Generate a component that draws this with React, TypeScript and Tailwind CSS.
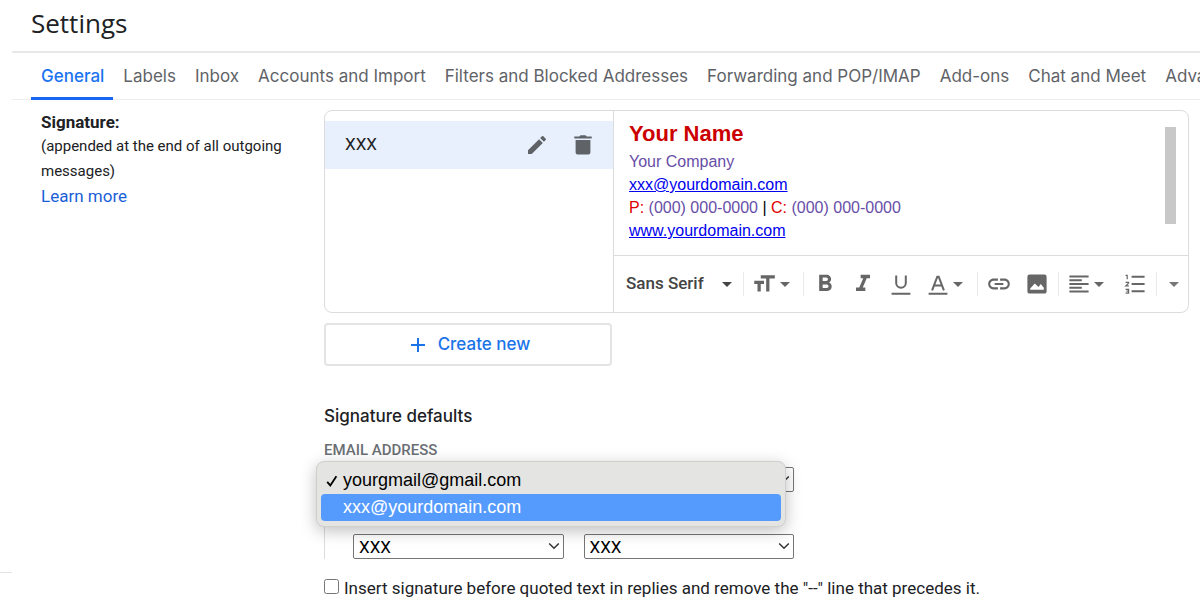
import { useState, type ReactNode } from 'react';
import {
  MdAdd,
  MdArrowDropDown,
  MdEdit,
  MdFormatBold,
  MdFormatItalic,
  MdFormatSize,
  MdLink,
} from 'react-icons/md';

const TABS = [
  'General',
  'Labels',
  'Inbox',
  'Accounts and Import',
  'Filters and Blocked Addresses',
  'Forwarding and POP/IMAP',
  'Add-ons',
  'Chat and Meet',
  'Advanced',
];

const EMAILS = ['yourgmail@gmail.com', 'xxx@yourdomain.com'];

function TrashIcon() {
  return (
    <svg className="h-6 w-6" viewBox="0 0 24 24" fill="currentColor" aria-hidden="true">
      <path d="M3.3 3.4h5l1.2-1.2h5l1.2 1.2h5v2H3.3zM4.6 7h14.8v12.6a2 2 0 0 1-2 2H6.6a2 2 0 0 1-2-2z" />
    </svg>
  );
}

function UnderlineIcon() {
  return (
    <svg className="h-6 w-6" viewBox="0 0 24 24" fill="none" stroke="currentColor" strokeWidth={2} aria-hidden="true">
      <path d="M7.2 3.6v7.4a4.8 4.8 0 0 0 9.6 0V3.6M2.6 21.8h18.8" />
    </svg>
  );
}

function TextColorIcon() {
  return (
    <svg className="h-6 w-6" viewBox="0 0 24 24" fill="none" stroke="currentColor" strokeWidth={2} aria-hidden="true">
      <path d="M6.1 18.4 11.3 4.7h1.4l5.2 13.7M8 13.6h8M2.6 21.8h18.8" />
    </svg>
  );
}

function ImageIcon() {
  return (
    <svg className="h-6 w-6" viewBox="0 0 24 24" fill="currentColor" fillRule="evenodd" aria-hidden="true">
      <path d="M4.6 2.4h14.8a2.2 2.2 0 0 1 2.2 2.2v14.8a2.2 2.2 0 0 1-2.2 2.2H4.6a2.2 2.2 0 0 1-2.2-2.2V4.6a2.2 2.2 0 0 1 2.2-2.2zM5.2 17.7h13.6v-1.9l-3-3.8-2.3 2.9-3.7-3.4-4.6 4.9z" />
    </svg>
  );
}

function AlignIcon() {
  return (
    <svg className="h-6 w-6" viewBox="0 0 24 24" fill="none" stroke="currentColor" strokeWidth={2} aria-hidden="true">
      <path d="M2.4 4.5h19.2M2.4 8.25h12.4M2.4 12h19.2M2.4 15.75h12.4M2.4 19.5h19.2" />
    </svg>
  );
}

function NumberedListIcon() {
  return (
    <svg className="h-6 w-6" viewBox="0 0 24 24" fill="none" stroke="currentColor" aria-hidden="true">
      <path strokeWidth={2} d="M8.6 4.8h13M8.6 12h13M8.6 19.2h13" />
      <path
        strokeWidth={1.2}
        d="M2.6 3.3h1.6v4M2.6 10.3h3v.8l-2.8 2.7h3M2.6 17.3h3v3.9h-3M3.4 19.2h2.2"
      />
    </svg>
  );
}

function Caret() {
  return <MdArrowDropDown className="h-6 w-6 shrink-0" aria-hidden="true" />;
}

function ToolButton({ label, wide = false, children }: { label: string; wide?: boolean; children: ReactNode }) {
  return (
    <button
      type="button"
      aria-label={label}
      className={`flex h-9 shrink-0 items-center justify-center text-[#666] ${wide ? 'w-[55px]' : 'w-[38px]'}`}
    >
      {children}
    </button>
  );
}

function Divider() {
  return <span className="mx-0.5 h-6 w-px shrink-0 bg-[#ebebeb]" />;
}

function Chevron() {
  return (
    <svg
      className="pointer-events-none absolute top-2 right-1 h-2 w-3"
      viewBox="0 0 12 8"
      fill="none"
      stroke="#333"
      strokeWidth={1.5}
      aria-hidden="true"
    >
      <path d="M1.2 1.5 6 6.2l4.800-4.700" />
    </svg>
  );
}

function SelectBox({ label, options }: { label: string; options: string[] }) {
  return (
    <div className="relative min-w-0 flex-1">
      <select
        aria-label={label}
        className="block h-[25px] w-full appearance-none rounded-xs border border-[#767676] bg-white pl-[5px] font-['Roboto',sans-serif] text-[17px] leading-5 text-black"
      >
        {options.map((o) => (
          <option key={o}>{o}</option>
        ))}
      </select>
      <Chevron />
    </div>
  );
}

function SignatureEditor() {
  return (
    <div className="flex min-w-0 flex-1 flex-col">
      <div className="flex h-36 justify-between pr-3 pl-[15px] font-['Liberation_Sans',sans-serif] text-base leading-[23px] text-[#674ea7]">
        <div className="pt-[9px]">
          <p className="mb-0.5 text-[22px] leading-7 font-bold text-[#cc0000]">Your Name</p>
          <p>Your Company</p>
          <p>
            <a href="mailto:xxx@yourdomain.com" className="text-[#0000ee] underline">
              xxx@yourdomain.com
            </a>
          </p>
          <p>
            <span className="text-[#e00000]">P:</span> (000) 000-0000 <span className="text-black">|</span>{' '}
            <span className="text-[#e00000]">C:</span> (000) 000-0000
          </p>
          <p>
            <a href="#www" className="text-[#0000ee] underline">
              www.yourdomain.com
            </a>
          </p>
        </div>
        <div className="mt-4 h-[97px] w-[11px] bg-[#c8c8c8]" />
      </div>
      <div className="flex h-[57px] items-center border-t border-[#dcdcdc]">
        <button
          type="button"
          className="flex w-[127px] shrink-0 items-center justify-between pr-0.5 pl-3 font-['Roboto',sans-serif] text-[17px] font-medium text-[#444]"
        >
          Sans Serif
          <Caret />
        </button>
        <Divider />
        <ToolButton label="Size" wide>
          <MdFormatSize size={26} className="shrink-0" />
          <span className="-ml-1 flex">
            <Caret />
          </span>
        </ToolButton>
        <Divider />
        <ToolButton label="Bold">
          <MdFormatBold size={28} />
        </ToolButton>
        <ToolButton label="Italic">
          <MdFormatItalic size={28} />
        </ToolButton>
        <ToolButton label="Underline">
          <UnderlineIcon />
        </ToolButton>
        <ToolButton label="Text color" wide>
          <TextColorIcon />
          <span className="-ml-1 flex">
            <Caret />
          </span>
        </ToolButton>
        <Divider />
        <ToolButton label="Link">
          <MdLink size={26} />
        </ToolButton>
        <ToolButton label="Insert image">
          <ImageIcon />
        </ToolButton>
        <Divider />
        <ToolButton label="Align" wide>
          <AlignIcon />
          <span className="-ml-1 flex">
            <Caret />
          </span>
        </ToolButton>
        <ToolButton label="Numbered list">
          <NumberedListIcon />
        </ToolButton>
        <Divider />
        <button type="button" aria-label="More" className="flex flex-1 justify-center text-[#777]">
          <Caret />
        </button>
      </div>
    </div>
  );
}

function EmailDropdown() {
  const [value, setValue] = useState(EMAILS[0]);
  const [active, setActive] = useState(EMAILS[1]);

  return (
    <div className="relative mt-2 flex">
      <SelectBox label="Email address" options={EMAILS} />
      <div
        role="listbox"
        aria-label="Email address options"
        className="absolute -top-1.5 right-2 -left-2 z-10 rounded-lg border border-[#cfcfcd] bg-[#e4e4e2] px-1 py-[5px] font-['Liberation_Sans',sans-serif] text-lg leading-[27px] shadow-[0_4px_16px_rgba(0,0,0,0.25)]"
      >
        {EMAILS.map((email) => (
          <button
            key={email}
            type="button"
            role="option"
            aria-selected={email === value}
            onMouseEnter={() => setActive(email)}
            onClick={() => setValue(email)}
            className={`flex w-full items-center rounded text-left ${email === active ? 'bg-[#559bfd] text-white' : 'text-black'}`}
          >
            <span className="flex w-[22px] justify-center">
              {email === value && (
                <svg className="h-3 w-3" viewBox="0 0 12 12" fill="none" stroke="currentColor" strokeWidth={1.8} aria-hidden="true">
                  <path d="M1.2 6.800 4.300 10.400 10.400 1.200" />
                </svg>
              )}
            </span>
            {email}
          </button>
        ))}
      </div>
    </div>
  );
}

export default function App() {
  return (
    <div className="flex h-screen overflow-hidden bg-white font-['Roboto',sans-serif] text-[#202124]">
      <div className="flex w-3 shrink-0 flex-col justify-end pb-8">
        <hr className="border-[#e4e4e4]" />
      </div>
      <main className="min-w-0 flex-1">
        <h1 className="h-[51px] pt-[3px] pl-[19px] font-['Open_Sans',sans-serif] text-[26px] leading-10">Settings</h1>
        <nav className="flex border-t-2 border-b border-t-[#e8e8e8] border-b-[#ededed] pl-[19px] font-['Inter',sans-serif] text-[17px] whitespace-nowrap text-[#5f6368]">
          {TABS.map((tab) => (
            <a
              key={tab}
              href={`#${tab}`}
              className={`-mb-px h-[47px] border-b-3 pt-[11px] pr-[9px] pl-[10px] leading-6 ${
                tab === 'General' ? 'border-[#1767f2] font-medium text-[#1a73f0]' : 'border-transparent'
              }`}
            >
              {tab}
            </a>
          ))}
        </nav>

        <div className="flex pt-[10px] pr-[11px] pl-[29px]">
          <div className="w-[283px] shrink-0 pr-8">
            <h2 className="text-[17px] leading-6 font-bold">Signature:</h2>
            <p className="text-[15px] leading-[25px]">(appended at the end of all outgoing messages)</p>
            <a href="#learn" className="text-[17px] leading-6 text-[#1a5fd8]">
              Learn more
            </a>
          </div>

          <div className="min-w-0 flex-1">
            <div className="flex rounded-lg border border-[#dcdcdc]">
              <div className="w-[289px] shrink-0 border-r border-[#dcdcdc] pt-[10px]">
                <div className="flex h-12 items-center bg-[#e8f0fe] pr-[18px] pl-5">
                  <span className="flex-1 text-[17px]">XXX</span>
                  <button type="button" aria-label="Edit" className="mr-[22px] text-[#5f6368]">
                    <MdEdit size={24} />
                  </button>
                  <button type="button" aria-label="Delete" className="text-[#5f6368]">
                    <TrashIcon />
                  </button>
                </div>
              </div>
              <SignatureEditor />
            </div>

            <button
              type="button"
              className="mt-[10px] flex h-[43px] w-72 items-center justify-center gap-2 rounded border-2 border-[#e4e4e4] font-['Inter',sans-serif] text-[17px] font-medium text-[#1a73e8]"
            >
              <MdAdd size={24} />
              Create new
            </button>

            <h2 className="mt-[38px] font-['Inter',sans-serif] text-[17px] leading-6 font-medium">Signature defaults</h2>
            <div className="w-[470px]">
              <p className="mt-3 text-[15px] leading-5 font-medium text-[#6b6f74]">EMAIL ADDRESS</p>
              <div className="-mt-px">
                <EmailDropdown />
              </div>
              <div className="flex gap-5 border-l border-[#dcdcdc] pt-[42px] pl-7">
                <SelectBox label="For new emails use" options={['XXX']} />
                <SelectBox label="On reply/forward use" options={['XXX']} />
              </div>
            </div>
            <label className="mt-[17px] flex items-center gap-[5px] text-[17px] leading-6">
              <input type="checkbox" className="mb-1 h-[15px] w-[15px]" />
              Insert signature before quoted text in replies and remove the "--" line that precedes it.
            </label>
          </div>
        </div>
      </main>
    </div>
  );
}
